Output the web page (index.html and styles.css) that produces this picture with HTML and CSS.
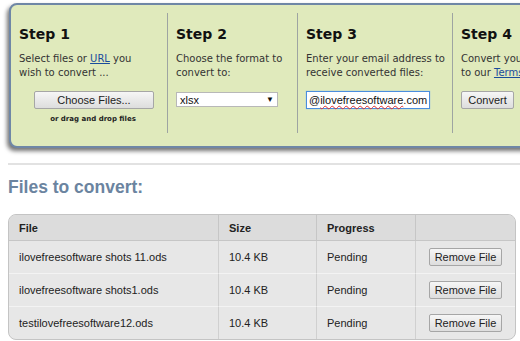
FILE: index.html
```html
<!DOCTYPE html>
<html lang="en">
<head>
<meta charset="UTF-8">
<meta name="viewport" content="width=device-width, initial-scale=1.0">
<title>Convert files</title>
<link rel="stylesheet" href="styles.css">
</head>
<body>
<div class="steps">
    <div class="step step-1">
        <h3 class="step-title">Step 1</h3>
        <p class="step-text">Select files or <a href="#">URL</a> you<br>wish to convert ...</p>
        <div class="choose-wrap">
            <button class="btn btn-choose">Choose Files...</button>
            <div class="drop-hint">or drag and drop files</div>
        </div>
    </div>
    <div class="step step-2">
        <h3 class="step-title">Step 2</h3>
        <p class="step-text">Choose the format to<br>convert to:</p>
        <div class="select-box"><span>xlsx</span><span class="select-arrow">&#9660;</span></div>
    </div>
    <div class="step step-3">
        <h3 class="step-title">Step 3</h3>
        <p class="step-text">Enter your email address to<br>receive converted files:</p>
        <div class="email-input">@<span class="misspelled">ilovefreesoftware</span>.com<span class="caret"></span></div>
    </div>
    <div class="step step-4">
        <h3 class="step-title">Step 4</h3>
        <p class="step-text">Convert your<br>to our <a href="#">Terms</a></p>
        <button class="btn btn-convert">Convert</button>
    </div>
</div>

<hr class="divider">

<h2 class="files-title">Files to convert:</h2>

<table class="files">
    <tr>
        <th class="col-file">File</th>
        <th class="col-size">Size</th>
        <th class="col-progress">Progress</th>
        <th class="col-action"></th>
    </tr>
    <tr>
        <td>ilovefreesoftware shots 11.ods</td>
        <td>10.4 KB</td>
        <td>Pending</td>
        <td class="col-action"><button class="btn btn-remove">Remove File</button></td>
    </tr>
    <tr>
        <td>ilovefreesoftware shots1.ods</td>
        <td>10.4 KB</td>
        <td>Pending</td>
        <td class="col-action"><button class="btn btn-remove">Remove File</button></td>
    </tr>
    <tr>
        <td>testilovefreesoftware12.ods</td>
        <td>10.4 KB</td>
        <td>Pending</td>
        <td class="col-action"><button class="btn btn-remove">Remove File</button></td>
    </tr>
</table>
</body>
</html>
```
FILE: styles.css
```css
html {
    overflow: hidden;
}

body {
    margin: 0;
    width: 520px;
    overflow: hidden;
    background-color: #ffffff;
    font-family: "Liberation Sans", Arial, sans-serif;
}

/* pannello verde con i 4 passi */
.steps {
    display: flex;
    width: 560px;
    height: 145px;
    margin: 3px 0 0 9px;
    padding-top: 8px;
    box-sizing: border-box;
    border: 2px solid #6f87a6;
    border-radius: 8px;
    background-color: #e0eabc;
    box-shadow: -2px 3px 4px rgba(0, 0, 0, 0.55);
}

.step {
    flex-shrink: 0;
    height: 120px;
    padding: 12px 0 0 8px;
    box-sizing: border-box;
    border-right: 1px solid #9ea4a2;
    font-family: "DejaVu Sans", Verdana, sans-serif;
}

.step-1 { width: 157px; }
.step-2 { width: 130px; }
.step-3 { width: 155px; }
.step-4 { width: 110px; border-right: none; }

.step-title {
    margin: 0;
    font-size: 14px;
    line-height: 18px;
    font-weight: bold;
    color: #111111;
}

.step-text {
    margin: 9px 0 0;
    font-size: 10px;
    line-height: 13.5px;
    color: #333333;
    white-space: nowrap;
}

.step-text a {
    color: #1a4c9c;
}

.btn {
    height: 18px;
    padding: 0 6px;
    border: 1px solid #a6a6a6;
    border-radius: 2px;
    background: linear-gradient(#f6f6f6, #dddddd);
    font-family: "Liberation Sans", Arial, sans-serif;
    font-size: 11px;
    color: #222222;
}

.choose-wrap {
    display: flex;
    flex-direction: column;
    align-items: center;
    margin-top: 12px;
}

.btn-choose {
    width: 120px;
    margin-left: 2px;
}

.drop-hint {
    margin-top: 6px;
    font-size: 7px;
    line-height: 9px;
    font-weight: bold;
    color: #222222;
}

.select-box {
    display: flex;
    justify-content: space-between;
    align-items: center;
    width: 102px;
    height: 15px;
    margin-top: 13px;
    padding: 0 3px;
    box-sizing: border-box;
    border: 1px solid #b8b8b8;
    background-color: #ffffff;
    font-family: "Liberation Sans", Arial, sans-serif;
    font-size: 11px;
    color: #111111;
}

.select-arrow {
    font-size: 8px;
}

.email-input {
    display: flex;
    align-items: center;
    width: 124px;
    height: 18px;
    margin-top: 12px;
    padding: 0 2px;
    box-sizing: border-box;
    border: 1px solid #4a8ede;
    box-shadow: 0 0 1px #7fb0ea;
    background-color: #ffffff;
    font-family: "Liberation Sans", Arial, sans-serif;
    font-size: 11px;
    color: #111111;
}

.misspelled {
    text-decoration: underline wavy #e03030;
    text-decoration-thickness: 1px;
}

.caret {
    width: 1px;
    height: 13px;
    margin-left: 1px;
    background-color: #000000;
}

.btn-convert {
    width: 53px;
    margin-top: 12px;
    padding: 0;
}

.divider {
    height: 0;
    margin: 15px 0 0 8px;
    border: none;
    border-top: 2px solid #e2e2e2;
}

.files-title {
    margin: 12px 0 0 8px;
    font-size: 17.5px;
    line-height: 20px;
    font-weight: bold;
    color: #6b84a0;
}

/* tabella dei file */
.files {
    width: 508px;
    margin: 17px 0 0 8px;
    border: 1px solid #c4c4c4;
    border-radius: 8px;
    border-spacing: 0;
    overflow: hidden;
    background-color: #e7e7e7;
    font-size: 11px;
    color: #222222;
}

.files th,
.files td {
    padding: 0 0 0 10px;
    text-align: left;
    border-left: 1px solid #d0d0d0;
    border-top: 1px solid #f3f3f3;
}

.files th {
    height: 25px;
    background-color: #dcdcdc;
    border-top: none;
    border-bottom: 1px solid #c6c6c6;
    border-left-color: #c6c6c6;
}

.files td {
    height: 32px;
}

.files tr > :first-child {
    border-left: none;
}

.files tr:nth-child(2) td {
    border-top: none;
}

.col-file { width: 199px; }
.col-size { width: 87px; }
.col-progress { width: 88px; }

.files .col-action {
    padding: 0;
    text-align: center;
}

.btn-remove {
    height: 18px;
    padding: 0 5px;
}
```
